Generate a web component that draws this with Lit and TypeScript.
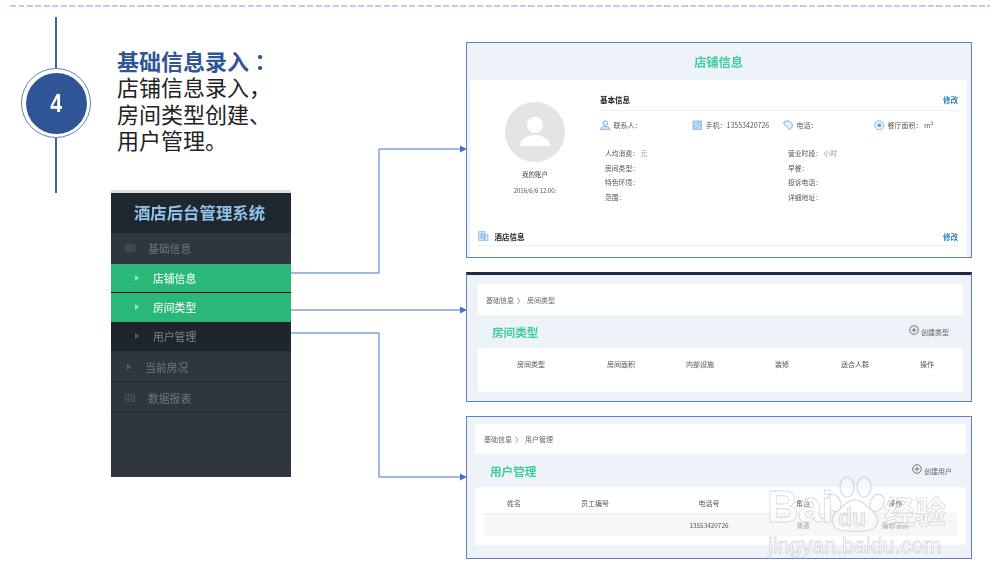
import { LitElement, html, css, svg } from "lit";
import { customElement } from "lit/decorators.js";

const gridIcon = html`<svg class="grid-ic" viewBox="0 0 10 8"><path d="M.5.5h9v7h-9zM.5 2.8h9M.5 5.2h9M3.5.5v7M6.5.5v7" fill="none" stroke="currentColor" stroke-width=".8"/></svg>`;
const plus = html`<svg class="plus" viewBox="0 0 10 10"><circle cx="5" cy="5" r="4.3" fill="none" stroke="#555" stroke-width=".8"/><path d="M5 2.6v4.8M2.6 5h4.8" stroke="#555" stroke-width=".8"/></svg>`;
const icContact = html`<svg class="ic" viewBox="0 0 11 11"><circle cx="5.5" cy="3.2" r="2.3" fill="none" stroke="#5a9fe3" stroke-width="1"/><path d="M.7 10.3c.2-2.6 1.6-3.6 3-3.9l1.8 1 1.8-1c1.4.3 2.8 1.3 3 3.9z" fill="#cfe3f7" stroke="#5a9fe3" stroke-width=".8"/></svg>`;
const icPhone = html`<svg class="ic" viewBox="0 0 11 11"><rect x=".5" y=".5" width="10" height="10" rx=".8" fill="#9cc6ee"/><path d="M2.5 3h3M2.5 5h2M3 8.5l5-5M8 6.5v2H6" stroke="#fff" stroke-width=".8" fill="none"/></svg>`;
const icTel = html`<svg class="ic" viewBox="0 0 11 11"><path d="M1 2.2C2.5.6 5 .8 6.6 1.6c2.2 1 3.6 2.6 3.2 4.6-.4 2-1.8 3.6-3 3.6C5.6 9.8 5.4 8 4 7 2.6 6 .2 3.8 1 2.2z" fill="#e7f2fc" stroke="#5a9fe3" stroke-width=".9"/></svg>`;
const icArea = html`<svg class="ic" viewBox="0 0 11 11"><circle cx="5.5" cy="5.5" r="4.8" fill="#e7f2fc" stroke="#7db3e8" stroke-width=".9"/><circle cx="5.5" cy="5.5" r="1.9" fill="#5a9fe3"/></svg>`;
const icDoc = html`<svg class="ic" viewBox="0 0 11 11"><path d="M.8.6h6.4v9.8H.8z" fill="#cfe3f7" stroke="#7db3e8" stroke-width=".8"/><path d="M7.2 4h3v6.4h-3zM2.4 3h3.2M2.4 5h3.2M2.4 7h3.2" fill="none" stroke="#5a9fe3" stroke-width=".8"/></svg>`;

const connectors = svg`
  <path d="M291 273H379V149H460M291 310H460M291 333H379V477H460" fill="none" stroke="#4472c4" stroke-width="1"/>
  <path d="M467 149l-7-3.5v7zM467 310l-7-3.5v7zM467 477l-7-3.5v7z" fill="#4472c4"/>`;

@customElement("app-root")
export class AppRoot extends LitElement {
  static styles = css`
    :host { display: block; position: relative; width: 1000px; height: 581px; overflow: hidden; background: #fff;
      font-family: "Noto Sans CJK SC", "Noto Sans", sans-serif; color: #333; }
    * { box-sizing: border-box; }
    .stage { position: relative; z-index: 0; padding-top: 5px; }
    .dash { height: 2px; margin: 0 10px; background: repeating-linear-gradient(90deg, #b9cdeb 0 6px, transparent 6px 8.5px); }
    .main { display: flex; }
    .left { width: 466px; flex: none; }
    .right { width: 506px; flex: none; padding-top: 35px; display: flex; flex-direction: column; gap: 14px; }

    .hero { display: flex; height: 176px; margin: 10px 0 -3px 21px; }
    .step { width: 70px; display: flex; flex-direction: column; align-items: center; }
    .vline { width: 2px; flex: 1; background: #3f64a6; }
    .vtop { flex: none; height: 51px; }
    .ring { width: 70px; height: 70px; flex: none; border-radius: 50%; border: 1.5px solid #5f80ba; padding: 3.5px; }
    .disc { width: 100%; height: 100%; border-radius: 50%; background: #2f5597; color: #fff; display: flex; align-items: center; justify-content: center;
      font: 700 26px "Liberation Sans", sans-serif; }
    .digit { display: block; transform: scaleX(.82); }
    .copy { margin: 30px 0 0 26px; font-size: 22px; line-height: 26.4px; color: #222; white-space: nowrap; }
    .copy b { display: block; color: #2f5597; font-weight: 700; }
    .colon { font-family: "Noto Sans CJK TC", sans-serif; }

    .side { margin-left: 111px; width: 180px; height: 287px; background: #2f3640; border-top: 3px solid #dcdcdc; filter: blur(.45px); position: relative; }
    .side-title { height: 40px; padding: 0 3px 2px 0; background: #20272f; color: #8fc3ea; font-size: 16.4px; font-weight: 700; display: flex; align-items: center; justify-content: center; white-space: nowrap; }
    .row { display: flex; align-items: center; font-size: 10.8px; color: #6f7780; white-space: nowrap; }
    .r-top { height: 31px; padding-left: 14px; gap: 13px; }
    .r-first { padding-bottom: 2px; }
    .r-low { padding-top: 1px; }
    .r-sub { height: 29px; padding-left: 24px; gap: 14px; padding-bottom: 1px; }
    .on { background: #29b878; color: #e6f7ef; font-weight: 500; }
    .sep { border-bottom: 1px solid #111; }
    .dark { background: #1f252d; color: #7b838c; height: 29px; }
    .line { border-bottom: 1px solid #262c35; }
    .r-arrow { padding-left: 16px; gap: 14px; }
    .tri { width: 0; height: 0; flex: none; border-left: 4px solid #5a626c; border-top: 3px solid transparent; border-bottom: 3px solid transparent; }
    .on .tri { border-left-color: #9fe0c2; }
    .grid-ic { width: 10px; height: 8px; color: #4b535d; flex: none; }

    .panel { border: 1px solid #5f83cb; background: #eef2f9; font-size: 7px; color: #555; }
    .blurred { filter: blur(.5px); }
    .p1 { height: 216px; display: flex; flex-direction: column; padding: 0 4px 0 3px; }
    .p1-title { height: 37px; padding-top: 1px; display: flex; align-items: center; justify-content: center; color: #3ccf9b; font-size: 12.2px; font-weight: 700; flex: none; }
    .p1-body { flex: 1; background: #fff; border-radius: 2px 2px 0 0; display: flex; flex-direction: column; }
    .p1-top { display: flex; flex: 1; }
    .acct { width: 130px; display: flex; flex-direction: column; align-items: center; padding-top: 22px; flex: none; }
    .avatar { width: 60px; height: 60px; border-radius: 50%; background: #e3e3e3; display: block; }
    .acct-name { margin-top: 7px; font-size: 6.5px; line-height: 10px; color: #444; }
    .acct-date { margin-top: 7px; font-size: 6px; line-height: 10px; color: #555; white-space: nowrap; }
    .info { flex: 1; padding-right: 9px; }
    .head { display: flex; justify-content: space-between; align-items: center; border-bottom: 1.5px solid #eeeff2; }
    .h1 { height: 31px; padding-top: 14px; padding-bottom: 6px; }
    .head b { font-size: 7.5px; color: #222; font-weight: 700; }
    .edit { font-size: 7.5px; font-weight: 700; color: #2e86c1; }
    .contacts { display: grid; grid-template-columns: 92px 91px 91px 1fr; margin-top: 8px; height: 12px; }
    .contact { display: flex; align-items: center; gap: 3px; white-space: nowrap; line-height: 12px; }
    .ic { width: 10.5px; height: 10.5px; flex: none; }
    .fields { display: grid; grid-template-columns: 183px 1fr; grid-auto-rows: 14.6px; margin: 15px 0 0 5px; align-items: center; white-space: nowrap; font-size: 6.8px; }
    .muted { color: #999; }
    .foot { margin: 0 9px 11px 8px; height: 18px; display: flex; align-items: center; border-bottom: 1.5px solid #eeeff2; justify-content: space-between; padding-bottom: 1px; }
    .foot-l { display: flex; align-items: center; gap: 6px; }
    .foot-l b { font-size: 7.5px; color: #222; font-weight: 700; }

    .p2 { height: 130px; border-top: 3px solid #1f2c4d; padding: 9px 8px 0 11px; }
    .p3 { height: 143px; padding: 7px 5px 0 8px; }
    .crumb { background: #fff; border-radius: 2px; height: 31px; padding-left: 8px; display: flex; align-items: center; gap: 3px; white-space: nowrap; color: #666; }
    .p3 .crumb { height: 30px; padding-left: 9px; }
    .title-row { height: 33px; display: flex; align-items: center; justify-content: space-between; padding: 0 14px 0 14px; }
    .p3 .title-row { padding-left: 15px; }
    .title-row b { color: #3ccf9b; font-size: 11.6px; font-weight: 700; }
    .create { display: flex; align-items: center; gap: 2px; font-size: 7px; color: #666; }
    .plus { width: 10px; height: 10px; margin-top: -3px; }
    .tbl { background: #fff; border-radius: 2px; }
    .t2 { height: 44px; }
    .t3 { height: 58px; padding: 0 9px; }
    .cols { display: grid; text-align: center; white-space: nowrap; align-items: center; }
    .c2 { grid-template-columns: 106px 74px 84px 80px 66px 78px; height: 31px; padding-top: 1px; }
    .c3 { grid-template-columns: 60px 102px 126px 62px 123px; height: 26px; }
    .c3-head { padding-top: 5px; }
    .gray { background: #f7f7f7; border-top: 1px solid #f0f0f0; height: 23px; font-size: 6.4px; }
    .faint { color: #aaa; }

    .wires { position: absolute; left: 0; top: 0; width: 1000px; height: 581px; pointer-events: none; z-index: -1; }
    .wm { position: absolute; left: 760px; top: 470px; width: 200px; height: 95px; opacity: .55; pointer-events: none; font-family: "Liberation Sans", sans-serif; color: #fff; -webkit-text-stroke: .8px #bdbdbd; z-index: 3; }
    .wm-paw { position: absolute; left: 60px; top: 2px; width: 70px; height: 68px; }
    .wm-row { position: absolute; left: 7px; top: 12px; font-size: 44px; font-weight: 700; line-height: 50px; letter-spacing: -1px; }
    .wm-du { position: absolute; left: 78px; top: 34px; font-size: 23px; line-height: 28px; font-weight: 700; color: #eee; }
    .wm-cn { position: absolute; left: 124px; top: 20px; font: 700 31px/40px "Noto Sans CJK SC", sans-serif; white-space: nowrap; }
    .wm-url { position: absolute; left: 8px; top: 63px; font-size: 21.5px; line-height: 26px; white-space: nowrap; }
  `;

  render() {
    return html`
      <div class="stage">
        <svg class="wires" viewBox="0 0 1000 581">${connectors}</svg>
        <div class="dash"></div>
        <div class="main">
          <div class="left">
            <div class="hero">
              <div class="step">
                <div class="vline vtop"></div>
                <div class="ring"><div class="disc"><span class="digit">4</span></div></div>
                <div class="vline"></div>
              </div>
              <div class="copy"><b>基础信息录入<span class="colon">：</span></b>店铺信息录入，<br />房间类型创建、<br />用户管理。</div>
            </div>
            <div class="side">
              <div class="side-title">酒店后台管理系统</div>
              <div class="row r-top r-first">${gridIcon}<span>基础信息</span></div>
              <div class="row r-sub on sep"><i class="tri"></i><span>店铺信息</span></div>
              <div class="row r-sub on"><i class="tri"></i><span>房间类型</span></div>
              <div class="row r-sub dark"><i class="tri"></i><span>用户管理</span></div>
              <div class="row r-top r-arrow r-low line"><i class="tri"></i><span>当前房况</span></div>
              <div class="row r-top r-low line">${gridIcon}<span>数据报表</span></div>
            </div>
          </div>
          <div class="right">
            <section class="panel p1 blurred">
              <div class="p1-title">店铺信息</div>
              <div class="p1-body">
                <div class="p1-top">
                  <div class="acct">
                    <svg class="avatar" viewBox="0 0 60 60">
                      <circle cx="30" cy="23" r="8" fill="#fff" />
                      <path d="M15 44c0-7 7-11 15-11s15 4 15 11z" fill="#fff" />
                    </svg>
                    <div class="acct-name">我的账户</div>
                    <div class="acct-date">2016/6/6 12:00:</div>
                  </div>
                  <div class="info">
                    <div class="head h1"><b>基本信息</b><span class="edit">修改</span></div>
                    <div class="contacts">
                      <div class="contact">${icContact}<span>联系人：</span></div>
                      <div class="contact">${icPhone}<span>手机：13553420726</span></div>
                      <div class="contact">${icTel}<span>电话：</span></div>
                      <div class="contact">${icArea}<span>餐厅面积： m²</span></div>
                    </div>
                    <div class="fields">
                      <span>人均消费： <span class="muted">元</span></span><span>营业时段： <span class="muted">小时</span></span>
                      <span>房间类型：</span><span>早餐：</span>
                      <span>特色环境：</span><span>投诉电话：</span>
                      <span>范围：</span><span>详细地址：</span>
                    </div>
                  </div>
                </div>
                <div class="foot">
                  <div class="foot-l">${icDoc}<b>酒店信息</b></div>
                  <span class="edit">修改</span>
                </div>
              </div>
            </section>

            <section class="panel p2 blurred">
              <div class="crumb"><span>基础信息</span><span>〉</span><span>房间类型</span></div>
              <div class="title-row"><b>房间类型</b><div class="create">${plus}<span>创建类型</span></div></div>
              <div class="tbl t2">
                <div class="cols c2"><span>房间类型</span><span>房间面积</span><span>内部设施</span><span>装修</span><span>适合人群</span><span>操作</span></div>
              </div>
            </section>

            <section class="panel p3 blurred">
              <div class="crumb"><span>基础信息</span><span>〉</span><span>用户管理</span></div>
              <div class="title-row"><b>用户管理</b><div class="create">${plus}<span>创建用户</span></div></div>
              <div class="tbl t3">
                <div class="cols c3 c3-head"><span>姓名</span><span>员工编号</span><span>电话号</span><span>角色</span><span>操作</span></div>
                <div class="cols c3 gray"><span></span><span></span><span>13553420726</span><span class="faint">普通</span><span class="faint">编辑 删除</span></div>
              </div>
            </section>
          </div>
        </div>
      </div>
      <div class="wm">
        <svg class="wm-paw" viewBox="0 0 70 68" fill="#fff" fill-opacity=".55" stroke="#bdbdbd" stroke-width="1.2">
          <ellipse cx="27" cy="15" rx="7" ry="10" />
          <ellipse cx="44" cy="15" rx="7" ry="10" />
          <ellipse cx="14" cy="31" rx="6.5" ry="9" transform="rotate(-25 14 31)" />
          <ellipse cx="57" cy="31" rx="6.5" ry="9" transform="rotate(25 57 31)" />
          <path d="M35 28c8 0 11 6 16 10 7 5 9 10 5 16-4 6-13 5-21 5s-17 1-21-5c-4-6-2-11 5-16 5-4 8-10 16-10z" />
        </svg>
        <div class="wm-row">Bai</div>
        <div class="wm-du">du</div>
        <div class="wm-cn">经验</div>
        <div class="wm-url">jingyan.baidu.com</div>
      </div>
    `;
  }
}
